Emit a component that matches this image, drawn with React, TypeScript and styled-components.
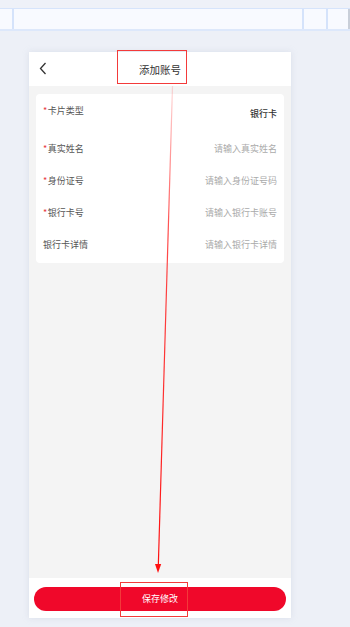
import React from 'react';
import styled, { createGlobalStyle } from 'styled-components';

const GlobalStyle = createGlobalStyle`
  html, body {
    margin: 0;
    padding: 0;
    background: #edf0f7;
    font-family: "Noto Sans CJK SC", "Noto Sans", sans-serif;
  }
`

interface Field {
  label: string;
  value: string;
  required?: boolean;
  filled?: boolean;
}

const fields: Field[] = [
  { label: '卡片类型', value: '银行卡', required: true, filled: true },
  { label: '真实姓名', value: '请输入真实姓名', required: true },
  { label: '身份证号', value: '请输入身份证号码', required: true },
  { label: '银行卡号', value: '请输入银行卡账号', required: true },
  { label: '银行卡详情', value: '请输入银行卡详情' },
]

const App = () => {
  return (
    <Page>
      <GlobalStyle />
      <TopStrip />
      <TabBar>
        <TabCell width={14} />
        <TabCell width={290} />
        <TabCell width={24} />
        <TabCell width={17} last />
      </TabBar>
      <Phone>
        <Header>
          <BackButton>
            <svg width="8" height="13" viewBox="0 0 8 13">
              <path d="M6.5 1 L1.5 6.5 L6.5 12" fill="none" stroke="#333" strokeWidth="1.3" />
            </svg>
          </BackButton>
          <Title>添加账号</Title>
        </Header>
        <Content>
          <Card>
            {fields.map((f, i) => (
              <Row key={f.label} first={i === 0}>
                <Label first={i === 0}>
                  {f.required && <Star>*</Star>}
                  {f.label}
                </Label>
                <Value filled={f.filled}>{f.value}</Value>
              </Row>
            ))}
          </Card>
        </Content>
        <Footer>
          <SaveButton>保存修改</SaveButton>
        </Footer>
      </Phone>

      <MarkBox top={50} left={117} width={70} height={34} />
      <MarkBox top={582} left={120} width={68} height={35} />
      <Arrow width="350" height="627" viewBox="0 0 350 627">
        <defs>
          <linearGradient id="fade" x1="0" y1="0" x2="0" y2="1">
            <stop offset="0" stopColor="#ff2020" stopOpacity="0.15" />
            <stop offset="0.3" stopColor="#ff2020" stopOpacity="0.8" />
            <stop offset="1" stopColor="#ff1010" stopOpacity="1" />
          </linearGradient>
        </defs>
        <path d="M172.5 86 L158.3 566" stroke="url(#fade)" strokeWidth="1.2" fill="none" />
        <polygon points="158,573 155,564 161.2,564" fill="#ff1010" />
      </Arrow>
    </Page>
  );
};

export default App;

const Page = styled.div`
  position: relative;
  width: 350px;
  height: 627px;
  overflow: hidden;
  background: #edf0f7;
`
const TopStrip = styled.div`
  height: 8px;
  background: #eef1f8;
`
const TabBar = styled.div`
  display: flex;
  height: 20px;
  border-top: 1px solid #d6e4fb;
  border-bottom: 2px solid #dde8fb;
  background: #f8faff;
`
const TabCell = styled.div<{ width: number; last?: boolean }>`
  width: ${p => p.width}px;
  flex: ${p => (p.last ? 1 : 'none')};
  border-right: ${p => (p.last ? '2px solid #c9cfd9' : '2px solid #d5e3fb')};
  box-sizing: border-box;
`
const Phone = styled.div`
  display: flex;
  flex-direction: column;
  width: 262px;
  height: 566px;
  margin: 21px 0 0 29px;
  background: #f4f4f4;
  box-shadow: 0 0 6px rgba(180, 190, 210, 0.35);
`
const Header = styled.div`
  position: relative;
  display: flex;
  align-items: center;
  justify-content: center;
  height: 34px;
  background: #fff;
`
const BackButton = styled.div`
  position: absolute;
  left: 10px;
  top: 10px;
  display: flex;
`
const Title = styled.div`
  font-size: 10.5px;
  color: #333;
  line-height: 14px;
  margin-top: 2px;
`
const Content = styled.div`
  flex: 1;
  padding: 8px 7px 0;
`
const Card = styled.div`
  background: #fff;
  border-radius: 4px;
  padding: 0 7px 2px;
`
const Row = styled.div<{ first?: boolean }>`
  display: flex;
  align-items: center;
  justify-content: space-between;
  height: ${p => (p.first ? 39 : 32)}px;
`
const Label = styled.div<{ first?: boolean }>`
  font-size: 9px;
  line-height: 14px;
  color: #555;
  align-self: ${p => (p.first ? 'flex-start' : 'center')};
  margin-top: ${p => (p.first ? 10 : 0)}px;
`
const Star = styled.span`
  color: #e8383d;
  margin-right: 0.5px;
`
const Value = styled.div<{ filled?: boolean }>`
  font-size: 9px;
  line-height: 14px;
  color: ${p => (p.filled ? '#333' : '#aaa')};
  font-weight: ${p => (p.filled ? 500 : 400)};
  margin-top: ${p => (p.filled ? 1 : 0)}px;
`
const Footer = styled.div`
  display: flex;
  align-items: center;
  height: 40px;
  padding: 0 5px;
  background: #fff;
`
const SaveButton = styled.div`
  flex: 1;
  height: 24px;
  margin-top: 1px;
  border-radius: 12px;
  background: #f0082a;
  color: #fff;
  font-size: 9px;
  display: flex;
  align-items: center;
  justify-content: center;
`
const MarkBox = styled.div<{ top: number; left: number; width: number; height: number }>`
  position: absolute;
  top: ${p => p.top}px;
  left: ${p => p.left}px;
  width: ${p => p.width}px;
  height: ${p => p.height}px;
  border: 1.5px solid #f33a3a;
  box-sizing: border-box;
  pointer-events: none;
`
const Arrow = styled.svg`
  position: absolute;
  top: 0;
  left: 0;
  pointer-events: none;
`
